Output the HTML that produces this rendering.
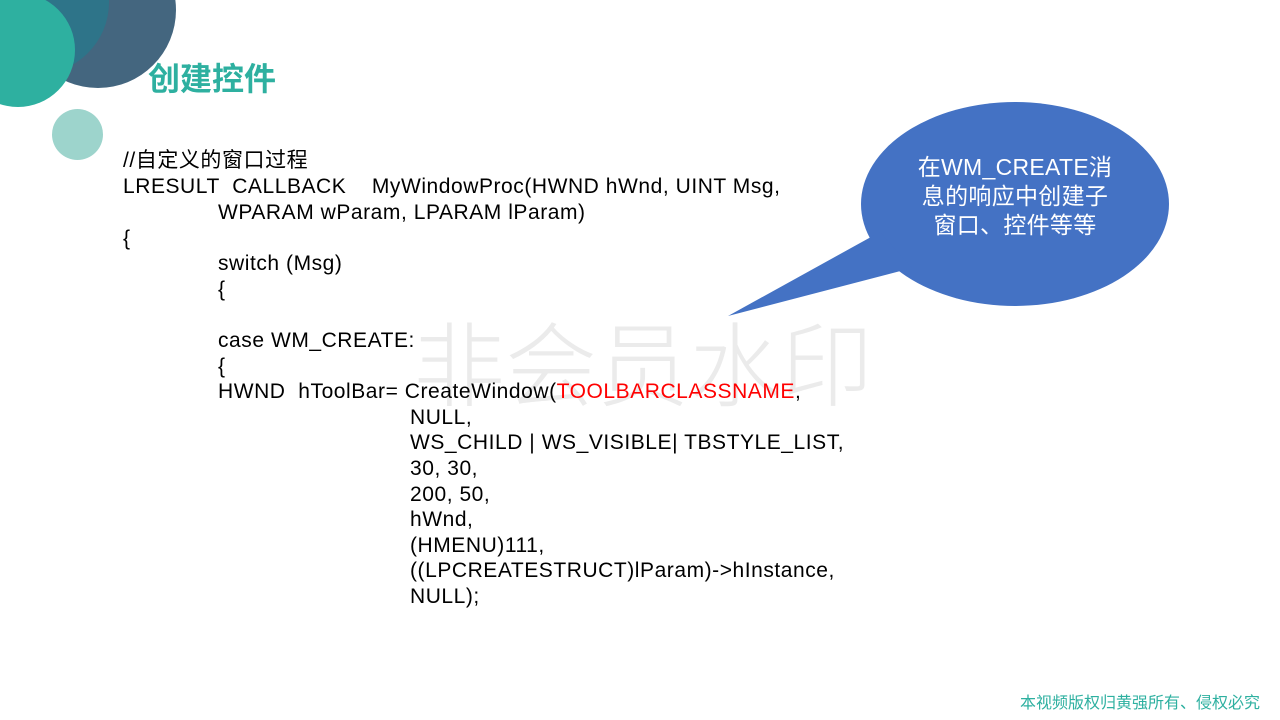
<!DOCTYPE html>
<html><head><meta charset="utf-8"><style>
html,body{margin:0;padding:0}
body{width:1280px;height:720px;position:relative;overflow:hidden;background:#fff;font-family:"Liberation Sans","Noto Sans CJK SC",sans-serif}
.c{position:absolute;border-radius:50%}
.l{position:absolute;font-size:21px;letter-spacing:0.55px;color:#000;white-space:pre;line-height:24px}
.wm{position:absolute;left:413px;top:300px;font-size:92px;color:#ebebeb;font-family:"Noto Sans CJK SC",sans-serif;font-weight:300;line-height:120px;white-space:nowrap}
</style></head><body>
<div class="wm">非会员水印</div>
<div class="c" style="left:20px;top:-68px;width:156px;height:156px;background:#44667f"></div>
<div class="c" style="left:-40px;top:-70px;width:149px;height:145px;background:#2e7489"></div>
<div class="c" style="left:-39px;top:-7px;width:114px;height:114px;background:#2eb0a0"></div>
<div class="c" style="left:52px;top:109px;width:51px;height:51px;background:#9dd4cc"></div>
<div style="position:absolute;left:148px;top:56px;font-size:32px;font-weight:bold;color:#2eb0a0;font-family:'Noto Sans CJK SC',sans-serif;line-height:42px">创建控件</div>
<svg style="position:absolute;left:0;top:0" width="1280" height="720">
<ellipse cx="1015" cy="204" rx="154" ry="102" fill="#4472c4"/>
<polygon points="728,316 880,232 912,268" fill="#4472c4"/>
</svg>
<div style="position:absolute;left:870px;top:153px;width:290px;text-align:center;color:#fff;font-size:23px;letter-spacing:0.3px;line-height:29px">在WM_CREATE消<br>息的响应中创建子<br>窗口、控件等等</div>
<div class="l" style="left:123px;top:149px">//自定义的窗口过程</div>
<div class="l" style="left:123px;top:175px">LRESULT  CALLBACK    MyWindowProc(HWND hWnd, UINT Msg,</div>
<div class="l" style="left:218px;top:201px">WPARAM wParam, LPARAM lParam)</div>
<div class="l" style="left:123px;top:227px">{</div>
<div class="l" style="left:218px;top:252px">switch (Msg)</div>
<div class="l" style="left:218px;top:278px">{</div>
<div class="l" style="left:218px;top:329px">case WM_CREATE:</div>
<div class="l" style="left:218px;top:355px">{</div>
<div class="l" style="left:218px;top:380px">HWND  hToolBar= CreateWindow(<span style="color:#f00">TOOLBARCLASSNAME</span>,</div>
<div class="l" style="left:410px;top:406px">NULL,</div>
<div class="l" style="left:410px;top:431px">WS_CHILD | WS_VISIBLE| TBSTYLE_LIST,</div>
<div class="l" style="left:410px;top:457px">30, 30,</div>
<div class="l" style="left:410px;top:483px">200, 50,</div>
<div class="l" style="left:410px;top:508px">hWnd,</div>
<div class="l" style="left:410px;top:534px">(HMENU)111,</div>
<div class="l" style="left:410px;top:559px">((LPCREATESTRUCT)lParam)-&gt;hInstance,</div>
<div class="l" style="left:410px;top:585px">NULL);</div>
<div style="position:absolute;right:20px;top:694px;font-size:16px;color:#2eb0a0;line-height:20px">本视频版权归黄强所有、侵权必究</div>
</body></html>
